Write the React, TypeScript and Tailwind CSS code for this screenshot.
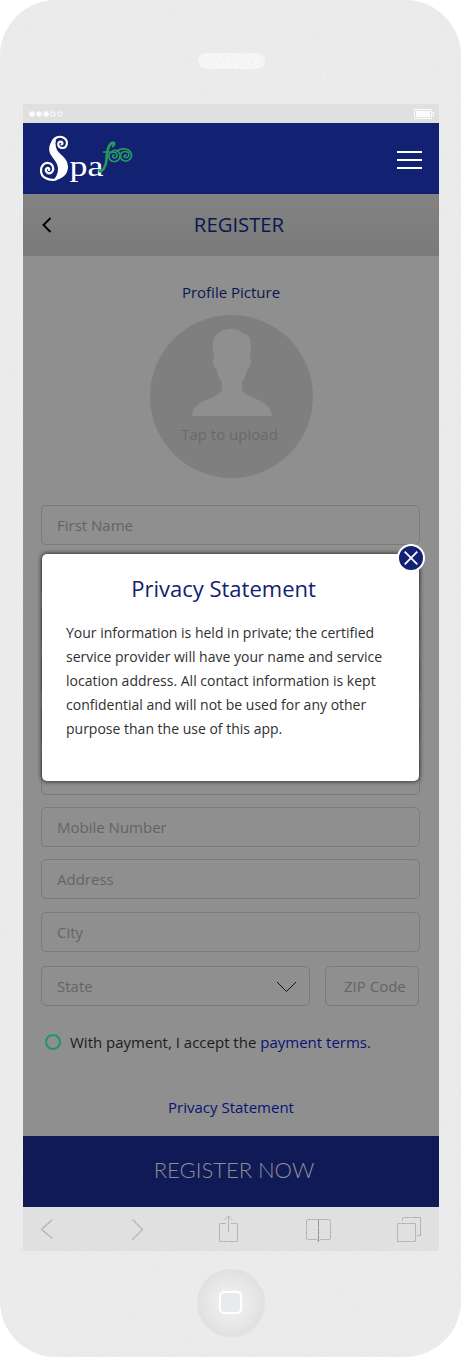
import React from "react";

function Field({ label = "", className = "" }: { label?: string; className?: string }) {
  return (
    <div className={`flex h-10 shrink-0 items-center rounded-[5px] border border-[#7a7a7a] pl-[15px] pt-px text-[15px] text-[#646464] ${className}`}>
      {label}
    </div>
  );
}

function Grain() {
  return (
    <svg className="pointer-events-none absolute inset-0 size-full" aria-hidden="true">
      <filter id="grain">
        <feTurbulence type="fractalNoise" baseFrequency="0.7" numOctaves="2" seed="4" />
        <feColorMatrix values="0 0 0 0 0.76  0 0 0 0 0.76  0 0 0 0 0.76  1.4 0 0 0 -0.6" />
      </filter>
      <rect width="100%" height="100%" filter="url(#grain)" />
    </svg>
  );
}

function Logo() {
  return (
    <svg width="96" height="53" viewBox="0 0 96 53" fill="none" strokeLinecap="round" className="shrink-0">
      <path fill="#fff" d="M17 6C10 9 8.500 18 12 23C15 28 19 31 19 37C19 42 17 45 14 48.500C22 48 29 43 29 35C29 26 21 23 18 18C16 14 16 9 18 5Z" />
      <g stroke="#fff">
        <path d="M13.500 10C15 5 21 3.500 25 6C30 9 28 16.500 23 16C18.500 15.500 18 10 21.500 9.500C24 9.500 24 12.500 22.500 12.500" strokeWidth="2.100" />
        <path d="M17 47.500C9 49 2 45 2 39C2 33 6 30.500 9.500 31C14.500 31.500 15.500 38 12.500 40.500C9 43 5.500 39 7.500 36.500C9 35 11 36.500 10 38" strokeWidth="2.200" />
      </g>
      <text x="30.500" y="44" fill="#fff" fontFamily="'Liberation Serif', serif" fontSize="30" textLength="34" lengthAdjust="spacingAndGlyphs">pa</text>
      <g stroke="#259a5f">
        <path d="M74 14C77 11 74 9.500 71.500 12C66 18 69 28 66 34C64.500 39 60 41 60.500 38" strokeWidth="2.600" />
        <path d="M64.500 20H72C75 17 79 18 81 22C82 27 78 30 74.500 29.500C69 28.500 68 20.500 74 20C79 20 79 26 75.500 26C73 25.500 73 23 75 23" strokeWidth="1.700" />
        <path d="M78 19C82 16 89 15.500 92 21C94 26.500 89 29.500 86 29C80 28 80 20 86 19.500C91 19.500 91 26 87 25.500C84.500 25.500 84.500 23 87 23" strokeWidth="1.700" />
      </g>
    </svg>
  );
}

function StatusBar() {
  return (
    <div className="flex h-[19px] items-center justify-between bg-[#e0e0e0] pl-[5.500px] pr-[5px]">
      <svg width="36" height="8" viewBox="0 0 36 8" fill="#fff">
        <circle cx="3" cy="4" r="2.800" />
        <circle cx="10" cy="4" r="2.800" />
        <circle cx="17" cy="4" r="2.800" />
        <circle cx="24" cy="4" r="2.200" fill="none" stroke="#fff" />
        <circle cx="31" cy="4" r="2.200" fill="none" stroke="#fff" />
      </svg>
      <svg width="20" height="10" viewBox="0 0 20 10" fill="none" stroke="#fff">
        <path d="M.5.500h17v9H.500zM18 3.500h1.500v3H18" />
        <path d="M2 2h14v6H2z" fill="#fff" stroke="none" />
      </svg>
    </div>
  );
}

function Toolbar() {
  return (
    <div className="h-11 bg-[#e0e0e0]">
      <svg width="416" height="44" viewBox="0 0 416 44" fill="none" stroke="#b3afb0">
        <path d="M29.500 12.500L18.500 22.500L29.500 31.500M109.500 12.500L119.500 22.500L109.500 32.500" strokeWidth="1.400" />
        <path d="M203 16.500H196.500V34.500H214.500V16.500H208M205.500 25V9M201.500 13L205.500 9L209.500 13" />
        <path d="M295.500 12.500H285Q283.500 12.500 283.500 14V31Q283.500 32.500 285 32.500H294L295.500 34L297 32.500H306Q307.500 32.500 307.500 31V14Q307.500 12.500 306 12.500Z" />
        <path d="M295.500 13V35" stroke="#8f898b" />
        <path d="M374.500 16.500H392.500V34.500H374.500ZM379.500 14V10.500H397.500V28.500H394" />
      </svg>
    </div>
  );
}

function Avatar() {
  return (
    <div className="ml-[109px] mt-[12px] flex size-[163px] shrink-0 flex-col items-center rounded-full bg-[#7f7f7f] pt-[14px]">
      <svg width="82" height="87" viewBox="0 0 82 87" fill="#8f8f8f">
        <path d="M40 0C46 0 49 1 51 4C58 5 60 10 60 16C60 21 60 25 58.500 29C61 30 60 39 56 41C55 46 53 50 51 53V60C53 70 79 69 81 87H1C2 69 29 71 31 60V53C28 50 27 46 26 41C21 38 21 30 23.500 29C18 11 25 0 40 0Z" />
      </svg>
      <span className="mt-[8px] -ml-[4px] text-[15px] leading-5 text-[#696969]">Tap to upload</span>
    </div>
  );
}

export default function App() {
  return (
    <div className="relative flex h-[1357px] w-[461px] flex-col overflow-hidden rounded-[56px] bg-[#ececec] font-['Open_Sans',sans-serif]">
      <div className="flex h-[104px] shrink-0 pl-[198px] pt-[53px]">
        <div className="h-4 w-[67px] rounded-full bg-[#f8f8f8]" />
      </div>
      <div className="ml-[23px] h-[19px] w-[416px]"><StatusBar /></div>
      <div className="order-last"><Grain /></div>
      <main className="relative z-10 ml-[23px] flex w-[416px] flex-col">
        <nav className="flex h-[71px] items-center justify-between bg-[#122172] pl-4 pr-[17px]">
          <Logo />
          <div className="mt-[3px] flex w-[25px] flex-col gap-[6px]">
            <i className="h-[2px] bg-white" />
            <i className="h-[2px] bg-white" />
            <i className="h-[2px] bg-white" />
          </div>
        </nav>
        <header className="grid h-[62px] grid-cols-[48px_1fr_48px] items-center bg-linear-to-b from-[#838383] to-[#7a7a7a]">
          <svg className="ml-[18px]" width="12" height="18" viewBox="0 0 12 18" fill="none" stroke="#000" strokeWidth="1.900"><path d="M9.500 2L2.500 9L9.500 16" /></svg>
          <h1 className="pb-[2px] pl-[16px] text-center text-[20.300px] text-[#0c164f]">REGISTER</h1>
        </header>
        <section className="flex h-[880px] flex-col bg-[#8f8f8f] px-[18px]">
          <h2 className="mt-[27px] h-5 text-center text-[15px] leading-[18px] text-[#0c164f]">Profile Picture</h2>
          <Avatar />
          <div className="mt-[27px] flex flex-col gap-[10px] pr-px">
            <Field label="First Name" />
            <Field />
            <Field />
            <Field />
            <Field />
            <Field label="Email Address" />
          </div>
          <Field label="Mobile Number" className="mr-px mt-3" />
          <Field label="Address" className="mr-px mt-3" />
          <Field label="City" className="mr-px mt-[13px]" />
          <div className="mt-[14px] flex gap-[15px]">
            <div className="flex h-10 w-[269px] items-center justify-between rounded-[5px] border border-[#7a7a7a] pl-[15px] pr-3 pt-px text-[15px] text-[#646464]">
              State
              <svg width="21" height="12" viewBox="0 0 21 12" fill="none" stroke="#111"><path d="M1 1L10.500 10.500L20 1" /></svg>
            </div>
            <Field label="ZIP Code" className="w-[94px] pl-[18px] whitespace-nowrap" />
          </div>
          <div className="mt-[26px] flex items-center pl-[4px] text-[15px] leading-5 text-[#1c1c1c]">
            <i className="mr-[9px] size-4 rounded-full border-2 border-[#239669]" />
            <p className="whitespace-nowrap">With payment, I accept the <a className="text-[#071376]">payment terms</a>.</p>
          </div>
          <a className="mt-[45px] text-center text-[15px] leading-5 text-[#071376]">Privacy Statement</a>
        </section>
        <button className="h-[71px] bg-[#101a57] pb-[4px] pl-[6px] font-['Lato',sans-serif] text-[22px] font-light text-[#8f8f8f]">REGISTER NOW</button>
        <div role="dialog" className="absolute left-[19px] top-[431px] h-[227px] w-[377px] rounded-[5px] bg-white px-6 pt-[19px] shadow-[0_0_4px_1px_rgba(0,0,0,0.6)]">
          <h2 className="-ml-[14px] text-center text-[22px] leading-[30px] text-[#122172]">Privacy Statement</h2>
          <p className="mt-[18px] whitespace-nowrap text-[14px] leading-6 text-[#303030]">
            Your information is held in private; the certified<br />
            service provider will have your name and service<br />
            location address. All contact information is kept<br />
            confidential and will not be used for any other<br />
            purpose than the use of this app.
          </p>
          <button aria-label="Close" className="absolute -right-[6px] -top-[10px] flex size-7 items-center justify-center rounded-full border-2 border-white bg-[#122172]">
            <svg width="14" height="14" viewBox="0 0 14 14" stroke="#fff" strokeWidth="1.800"><path d="M.7.700L13.300 13.300M13.300.700L.7 13.300" /></svg>
          </button>
        </div>
      </main>
      <div className="ml-[23px] w-[416px]"><Toolbar /></div>
      <div className="flex h-[106px] pl-[197px] pt-[18px]">
        <div className="flex size-[68px] items-center justify-center rounded-full bg-radial from-[#f1f1f1] from-20% to-[#dedede] to-75%">
          <div className="relative z-10 -mt-px -ml-px size-[23px] rounded-[5px] border-2 border-white bg-[#e9eaec]" />
        </div>
      </div>
    </div>
  );
}
